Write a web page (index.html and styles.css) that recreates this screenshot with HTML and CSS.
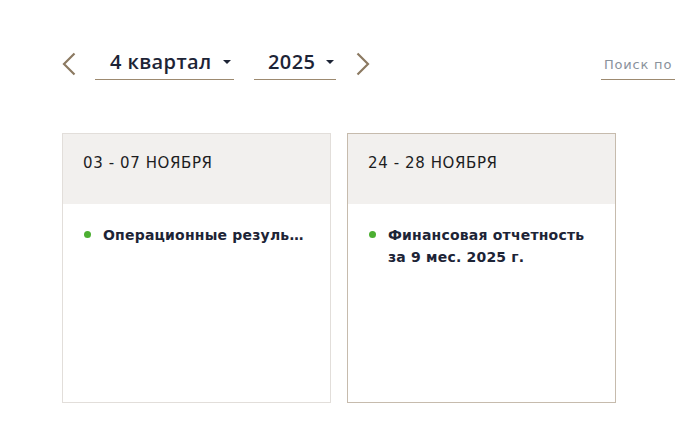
FILE: index.html
```html
<!DOCTYPE html>
<html lang="ru">
<head>
<meta charset="utf-8">
<link rel="stylesheet" href="styles.css">
</head>
<body>
<div class="page">
  <div class="toolbar">
    <div class="nav">
      <button class="arrow" aria-label="Назад">
        <svg width="14" height="24" viewBox="0 0 14 24"><path d="M12.5 1.5 L2 12 L12.5 22.5" fill="none" stroke="#8c7a62" stroke-width="2.2"/></svg>
      </button>
      <div class="select quarter"><span>4 квартал</span><i class="caret"></i></div>
      <div class="select year"><span>2025</span><i class="caret"></i></div>
      <button class="arrow" aria-label="Вперёд">
        <svg width="14" height="24" viewBox="0 0 14 24"><path d="M1.5 1.5 L12 12 L1.5 22.5" fill="none" stroke="#8c7a62" stroke-width="2.2"/></svg>
      </button>
    </div>
    <div class="search"><span>Поиск по</span></div>
  </div>
  <div class="cards">
    <div class="card">
      <div class="card-head">03 - 07 НОЯБРЯ</div>
      <ul class="events">
        <li><span class="ellipsis">Операционные результаты</span></li>
      </ul>
    </div>
    <div class="card active">
      <div class="card-head">24 - 28 НОЯБРЯ</div>
      <ul class="events">
        <li>Финансовая отчетность за 9 мес. 2025 г.</li>
      </ul>
    </div>
  </div>
</div>
</body>
</html>
```
FILE: styles.css
```css
html, body {
  margin: 0;
  padding: 0;
  background: #fff;
  font-family: "DejaVu Sans", "Open Sans", sans-serif;
  color: #1d2436;
  overflow: hidden;
}
.page {
  padding: 52px 0 0 62px;
}
.toolbar {
  display: flex;
  align-items: flex-start;
  justify-content: space-between;
  height: 81px;
}
.nav {
  display: flex;
  align-items: flex-start;
}
.arrow {
  border: 0;
  background: none;
  padding: 0;
  margin: 0;
  width: 14px;
  height: 24px;
  display: block;
}
.select {
  display: flex;
  align-items: flex-start;
  height: 30px;
  margin-top: -2px;
  border-bottom: 1.5px solid #9d8a70;
  font-family: "Open Sans", "DejaVu Sans", sans-serif;
  font-size: 20px;
  line-height: 24px;
  font-weight: 600;
  letter-spacing: 0.4px;
  color: #1d2436;
  box-sizing: border-box;
}
.quarter {
  margin-left: 19px;
  width: 139px;
  padding-left: 15px;
}
.year {
  margin-left: 20px;
  width: 82px;
  padding-left: 14px;
  margin-right: 20px;
}
.caret {
  display: inline-block;
  width: 0;
  height: 0;
  border-left: 4px solid transparent;
  border-right: 4px solid transparent;
  border-top: 4px solid #1d2436;
  margin-left: 11px;
  margin-top: 10px;
}
.search {
  width: 74px;
  height: 30px;
  margin-top: -2px;
  border-bottom: 1.5px solid #9d8a70;
  font-size: 13px;
  line-height: 16px;
  letter-spacing: 0.8px;
  color: #8a929c;
  padding: 7px 0 0 3px;
  box-sizing: border-box;
  white-space: nowrap;
  overflow: hidden;
}
.cards {
  display: flex;
  gap: 16px;
}
.card {
  width: 269px;
  height: 270px;
  box-sizing: border-box;
  border: 1px solid #e2deda;
}
.card.active {
  border-color: #c6bbad;
}
.card-head {
  background: #f2f0ee;
  height: 70px;
  box-sizing: border-box;
  padding: 20px 0 0 20px;
  font-size: 15px;
  letter-spacing: 0.6px;
  color: #1d1d1f;
}
.events {
  list-style: none;
  margin: 0;
  padding: 20px 20px 0 40px;
}
.events li {
  position: relative;
  font-size: 14px;
  font-weight: 700;
  line-height: 22px;
  letter-spacing: 0.2px;
  color: #1d2436;
}
.events li::before {
  content: "";
  position: absolute;
  left: -19px;
  top: 7px;
  width: 7px;
  height: 7px;
  border-radius: 50%;
  background: #4caf32;
}
.ellipsis {
  display: block;
  white-space: nowrap;
  overflow: hidden;
  text-overflow: ellipsis;
}
```
